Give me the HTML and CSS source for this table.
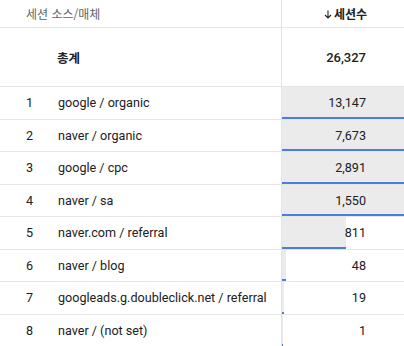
FILE: index.html
```html
<!DOCTYPE html>
<html lang="ko">
<head>
<meta charset="utf-8">
<link rel="stylesheet" href="styles.css">
</head>
<body>
<div class="table">
  <div class="row head">
    <div class="cell left"><span class="head-label">세션 소스/매체</span></div>
    <div class="cell right"><span class="sort"><svg class="arrow" width="8" height="9" viewBox="0 0 8 9"><path d="M4 0.5V8M1 5L4 8L7 5" fill="none" stroke="#202124" stroke-width="1.1"/></svg>세션수</span></div>
  </div>
  <div class="row total">
    <div class="cell left"><span class="total-label">총계</span></div>
    <div class="cell right"><span class="val total-val">26,327</span></div>
  </div>
  <div class="row data">
    <div class="cell left"><span class="num">1</span><span class="label">google / organic</span></div>
    <div class="cell right"><div class="bar" style="width:1037px"></div><span class="val">13,147</span></div>
  </div>
  <div class="row data">
    <div class="cell left"><span class="num">2</span><span class="label">naver / organic</span></div>
    <div class="cell right"><div class="bar" style="width:605px"></div><span class="val">7,673</span></div>
  </div>
  <div class="row data">
    <div class="cell left"><span class="num">3</span><span class="label">google / cpc</span></div>
    <div class="cell right"><div class="bar" style="width:228px"></div><span class="val">2,891</span></div>
  </div>
  <div class="row data">
    <div class="cell left"><span class="num">4</span><span class="label">naver / sa</span></div>
    <div class="cell right"><div class="bar" style="width:122px"></div><span class="val">1,550</span></div>
  </div>
  <div class="row data">
    <div class="cell left"><span class="num">5</span><span class="label">naver.com / referral</span></div>
    <div class="cell right"><div class="bar" style="width:64px"></div><span class="val">811</span></div>
  </div>
  <div class="row data">
    <div class="cell left"><span class="num">6</span><span class="label">naver / blog</span></div>
    <div class="cell right"><div class="bar" style="width:3.8px"></div><span class="val">48</span></div>
  </div>
  <div class="row data">
    <div class="cell left"><span class="num">7</span><span class="label">googleads.g.doubleclick.net / referral</span></div>
    <div class="cell right"><div class="bar" style="width:1.5px"></div><span class="val">19</span></div>
  </div>
  <div class="row data">
    <div class="cell left"><span class="num">8</span><span class="label">naver / (not set)</span></div>
    <div class="cell right"><div class="bar" style="width:0.5px"></div><span class="val">1</span></div>
  </div>
</div>
</body>
</html>
```
FILE: styles.css
```css
html, body {
  margin: 0;
  padding: 0;
  background: #ffffff;
  overflow: hidden;
}
body {
  width: 404px;
  height: 346px;
  font-family: Roboto, "Noto Sans CJK KR", sans-serif;
  color: #202124;
  font-size: 12.6px;
}
.table {
  display: flex;
  flex-direction: column;
}
.row {
  display: grid;
  grid-template-columns: 282px 122px;
}
.cell {
  display: flex;
  align-items: center;
  box-sizing: border-box;
  border-bottom: 1px solid #e6e6e6;
}
.left {
  border-right: 1px solid #e3e3e3;
  padding-left: 26px;
}
.right {
  position: relative;
  justify-content: flex-end;
  padding-right: 38px;
  overflow: hidden;
}
.head .cell { height: 28px; }
.head-label {
  font-size: 12px;
  color: #5f6368;
  font-family: "Noto Sans CJK KR", sans-serif;
}
.sort {
  display: flex;
  align-items: center;
  gap: 2px;
  font-size: 12px;
  font-weight: 700;
  font-family: "Noto Sans CJK KR", sans-serif;
  margin-right: -1px;
}
.arrow { margin-top: 1px; }
.total .cell { height: 59px; }
.total-label {
  padding-left: 31px;
  font-weight: 700;
  font-family: "Noto Sans CJK KR", sans-serif;
  font-size: 12.5px;
}
.total-val { font-weight: 500; font-size: 13px; }
.data .cell { height: 32.5px; }
.num {
  width: 32px;
}
.label { white-space: nowrap; }
.val {
  position: relative;
  z-index: 1;
}
.bar {
  position: absolute;
  left: 0;
  top: 0;
  bottom: 0;
  background: #ebebeb;
  border-bottom: 2px solid #4a80dc;
  box-sizing: border-box;
}
```
